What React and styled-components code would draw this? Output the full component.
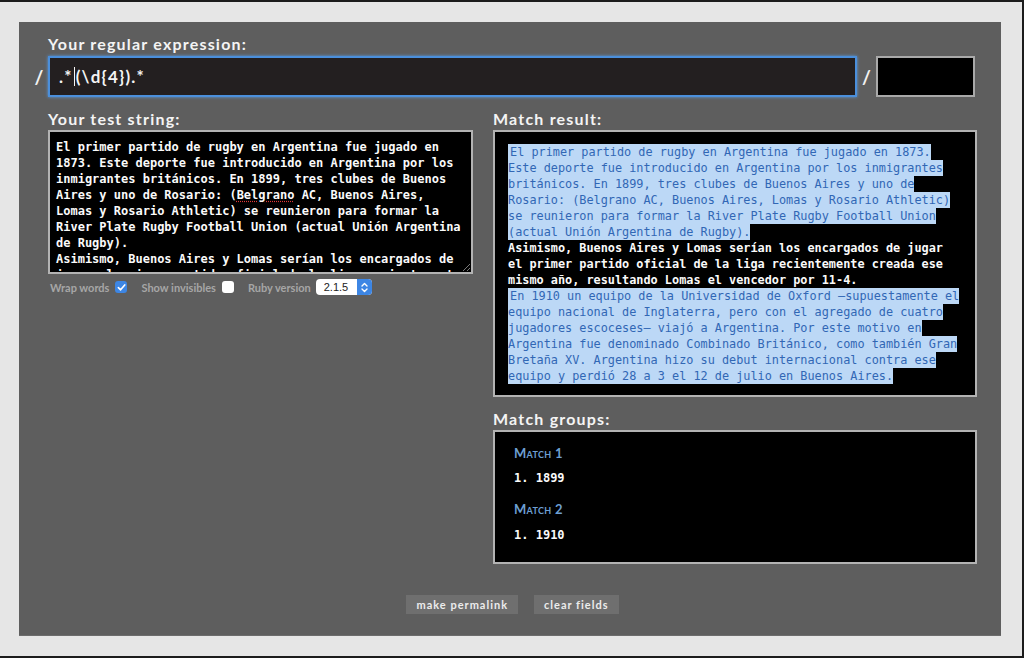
import React from "react";
import styled, { createGlobalStyle } from "styled-components";

const GlobalStyle = createGlobalStyle`
  html, body {
    margin: 0;
    padding: 0;
    background: #e6e6e6;
  }
`;

const Frame = styled("div")`
  width: 1024px;
  height: 658px;
  box-sizing: border-box;
  background-color: #e6e6e6;
  border-top: 2px solid #1c1c1c;
  border-right: 2px solid #1c1c1c;
  border-bottom: 2px solid #1c1c1c;
  padding: 20px 21px 20px 19px;
`;

const Panel = styled("div")`
  height: 100%;
  box-sizing: border-box;
  background-color: #5e5e5e;
  border-bottom: 1px solid #6c6c6c;
  padding: 13px 24px 0 29px;
  display: flex;
  flex-direction: column;
  font-family: "Lato", "Noto Sans", sans-serif;
`;

const Label = styled("div")`
  font-size: 16px;
  line-height: 18px;
  font-weight: 700;
  color: #f4f4f4;
  letter-spacing: 1.2px;
  margin-top: ${(props) => props.top || 0}px;
  margin-bottom: ${(props) => props.bottom || 2}px;
`;

const RegexRow = styled("div")`
  display: flex;
  align-items: center;
  height: 41px;
  margin-left: -18px;
  margin-right: 2px;
`;

const Slash = styled("div")`
  width: ${(props) => props.w}px;
  text-align: center;
  color: #f2f2f2;
  font-size: 19px;
  font-weight: 700;
`;

const RegexInput = styled("div")`
  flex: 1;
  height: 100%;
  box-sizing: border-box;
  background-color: #231f20;
  border: 2px solid #4b8fdb;
  box-shadow: 0 0 3px #5a9be2;
  display: flex;
  align-items: center;
  padding-left: 9px;
  color: #f4f4f4;
  font-size: 17px;
  font-weight: 700;
  letter-spacing: 1.2px;
`;

const Caret = styled("span")`
  display: inline-block;
  width: 1px;
  height: 19px;
  background: #f4f4f4;
  margin: 0 1px;
`;

const OptionsBox = styled("div")`
  width: 99px;
  height: 100%;
  box-sizing: border-box;
  background-color: #000;
  border: 2px solid #a9a9a9;
`;

const Columns = styled("div")`
  display: flex;
  gap: 20px;
  margin-top: 13px;
`;

const LeftCol = styled("div")`
  width: 425px;
  flex-shrink: 0;
  display: flex;
  flex-direction: column;
`;

const RightCol = styled("div")`
  flex: 1;
  min-width: 0;
  display: flex;
  flex-direction: column;
`;

const MonoBox = styled("div")`
  box-sizing: border-box;
  height: ${(props) => props.h}px;
  background-color: #000;
  border: 2px solid #b3b3b3;
  padding: ${(props) => props.pad};
  overflow: hidden;
  font-family: "DejaVu Sans Mono", "Liberation Mono", monospace;
  font-size: ${(props) => props.fs || 12}px;
  line-height: 16px;
  color: #fafafa;
  position: relative;
`;

const TestText = styled("div")`
  white-space: pre-wrap;
  font-weight: 700;
`;

const Misspelled = styled("span")`
  text-decoration: underline dotted #e03a3a;
  text-underline-offset: 2px;
`;

const Grip = styled("div")`
  position: absolute;
  right: 1px;
  bottom: 1px;
  width: 7px;
  height: 7px;
  background: linear-gradient(135deg, transparent 45%, #777 45%, #777 55%, transparent 55%, transparent 75%, #777 75%, #777 85%, transparent 85%);
`;

const ResultLine = styled("div")`
  width: fit-content;
  white-space: pre;
  padding-left: ${(props) => (props.first ? 2 : 0)}px;
  background-color: ${(props) => (props.hl ? "#bcd8f6" : "transparent")};
  color: ${(props) => (props.hl ? "#3167b5" : "#fafafa")};
  font-weight: ${(props) => (props.hl ? 400 : 700)};
`;

const OptionsRow = styled("div")`
  display: flex;
  align-items: center;
  margin-top: 5px;
  padding-left: 2px;
  height: 16px;
  font-size: 11px;
  font-weight: 700;
  color: #a6a6a6;
`;

const Option = styled("label")`
  display: flex;
  align-items: center;
  gap: 6px;
  margin-right: 14px;
`;

const Check = styled("span")`
  width: 12px;
  height: 12px;
  border-radius: 3px;
  box-sizing: border-box;
  background-color: ${(props) => (props.on ? "#3d86e4" : "#fff")};
  display: flex;
  align-items: center;
  justify-content: center;
`;

const Select = styled("div")`
  display: flex;
  height: 16px;
  border-radius: 4px;
  overflow: hidden;
  background: #fff;
  margin-left: -9px;
`;

const SelectValue = styled("span")`
  width: 41px;
  padding-left: 8px;
  box-sizing: border-box;
  color: #222;
  font-family: "Liberation Sans", sans-serif;
  font-weight: 400;
  font-size: 11px;
  line-height: 16px;
`;

const SelectArrows = styled("span")`
  width: 15px;
  background: #3d86e4;
  display: flex;
  align-items: center;
  justify-content: center;
`;

const GroupsBox = styled(MonoBox)`
  font-weight: 700;
`;

const GroupTitle = styled("div")`
  font-family: "Lato", "Noto Sans", sans-serif;
  font-variant: small-caps;
  font-size: 13px;
  line-height: 14px;
  font-weight: 700;
  letter-spacing: 0.3px;
  color: #6d9fd2;
  margin-top: ${(props) => props.top}px;
`;

const GroupItem = styled("div")`
  margin-top: ${(props) => props.top}px;
  line-height: 16px;
`;

const Buttons = styled("div")`
  display: flex;
  justify-content: center;
  gap: 16px;
  margin-top: 31px;
`;

const Button = styled("button")`
  height: 19px;
  border: none;
  background-color: #6f6f6f;
  color: #ececec;
  font-family: "Lato", "Noto Sans", sans-serif;
  font-size: 11px;
  font-weight: 700;
  letter-spacing: 1px;
  padding: 0 10px;
  cursor: pointer;
`;

const firstMatch = [
  "El primer partido de rugby en Argentina fue jugado en 1873.",
  "Este deporte fue introducido en Argentina por los inmigrantes",
  "británicos. En 1899, tres clubes de Buenos Aires y uno de",
  "Rosario: (Belgrano AC, Buenos Aires, Lomas y Rosario Athletic)",
  "se reunieron para formar la River Plate Rugby Football Union",
  "(actual Unión Argentina de Rugby).",
];

const noMatch = [
  "Asimismo, Buenos Aires y Lomas serían los encargados de jugar",
  "el primer partido oficial de la liga recientemente creada ese",
  "mismo año, resultando Lomas el vencedor por 11-4.",
];

const secondMatch = [
  "En 1910 un equipo de la Universidad de Oxford —supuestamente el",
  "equipo nacional de Inglaterra, pero con el agregado de cuatro",
  "jugadores escoceses— viajó a Argentina. Por este motivo en",
  "Argentina fue denominado Combinado Británico, como también Gran",
  "Bretaña XV. Argentina hizo su debut internacional contra ese",
  "equipo y perdió 28 a 3 el 12 de julio en Buenos Aires.",
];

const groups = [
  { title: "Match 1", value: "1899" },
  { title: "Match 2", value: "1910" },
];

const CheckIcon = () => (
  <svg width="9" height="9" viewBox="0 0 10 10">
    <path d="M1.5 5.2 L4 7.6 L8.6 2.2" fill="none" stroke="#fff" strokeWidth="1.8" strokeLinecap="round" strokeLinejoin="round" />
  </svg>
);

const ArrowsIcon = () => (
  <svg width="7" height="11" viewBox="0 0 7 11">
    <path d="M1 4 L3.5 1.5 L6 4 M1 7 L3.5 9.5 L6 7" fill="none" stroke="#fff" strokeWidth="1.4" strokeLinecap="round" strokeLinejoin="round" />
  </svg>
);

export default function App() {
  return (
    <>
      <GlobalStyle />
      <Frame>
        <Panel>
          <Label bottom={3}>Your regular expression:</Label>
          <RegexRow>
            <Slash w={18}>/</Slash>
            <RegexInput>
              .*<Caret />(\d{"{4}"}).*
            </RegexInput>
            <Slash w={19}>/</Slash>
            <OptionsBox />
          </RegexRow>

          <Columns>
            <LeftCol>
              <Label>Your test string:</Label>
              <MonoBox h={144} pad="7px 6px">
                <TestText>
                  El primer partido de rugby en Argentina fue jugado en 1873. Este deporte fue
                  introducido en Argentina por los inmigrantes británicos. En 1899, tres clubes de
                  Buenos Aires y uno de Rosario: (<Misspelled>Belgrano</Misspelled> AC, Buenos Aires,
                  Lomas y Rosario Athletic) se reunieron para formar la River Plate Rugby Football
                  Union (actual Unión Argentina de Rugby).{"\n"}Asimismo, Buenos Aires y Lomas serían
                  los encargados de jugar el primer partido oficial de la liga recientemente creada
                  ese mismo año, resultando Lomas el vencedor por 11-4.
                </TestText>
                <Grip />
              </MonoBox>
              <OptionsRow>
                <Option>
                  Wrap words
                  <Check on>
                    <CheckIcon />
                  </Check>
                </Option>
                <Option>
                  Show invisibles
                  <Check />
                </Option>
                <Option>Ruby version</Option>
                <Select>
                  <SelectValue>2.1.5</SelectValue>
                  <SelectArrows>
                    <ArrowsIcon />
                  </SelectArrows>
                </Select>
              </OptionsRow>
            </LeftCol>

            <RightCol>
              <Label>Match result:</Label>
              <MonoBox h={267} fs={11.85} pad="12px 8px 0 13px">
                {firstMatch.map((line, i) => (
                  <ResultLine hl first={i === 0} key={line}>{line}</ResultLine>
                ))}
                {noMatch.map((line) => (
                  <ResultLine key={line}>{line}</ResultLine>
                ))}
                {secondMatch.map((line, i) => (
                  <ResultLine hl first={i === 0} key={line}>{line}</ResultLine>
                ))}
              </MonoBox>

              <Label top={13}>Match groups:</Label>
              <GroupsBox h={134} pad="14px 19px 0">
                {groups.map((g, i) => (
                  <React.Fragment key={g.title}>
                    <GroupTitle top={i === 0 ? 0 : 16}>{g.title}</GroupTitle>
                    <GroupItem top={i === 0 ? 10 : 11}>1.  {g.value}</GroupItem>
                  </React.Fragment>
                ))}
              </GroupsBox>
            </RightCol>
          </Columns>

          <Buttons>
            <Button>make permalink</Button>
            <Button>clear fields</Button>
          </Buttons>
        </Panel>
      </Frame>
    </>
  );
}
